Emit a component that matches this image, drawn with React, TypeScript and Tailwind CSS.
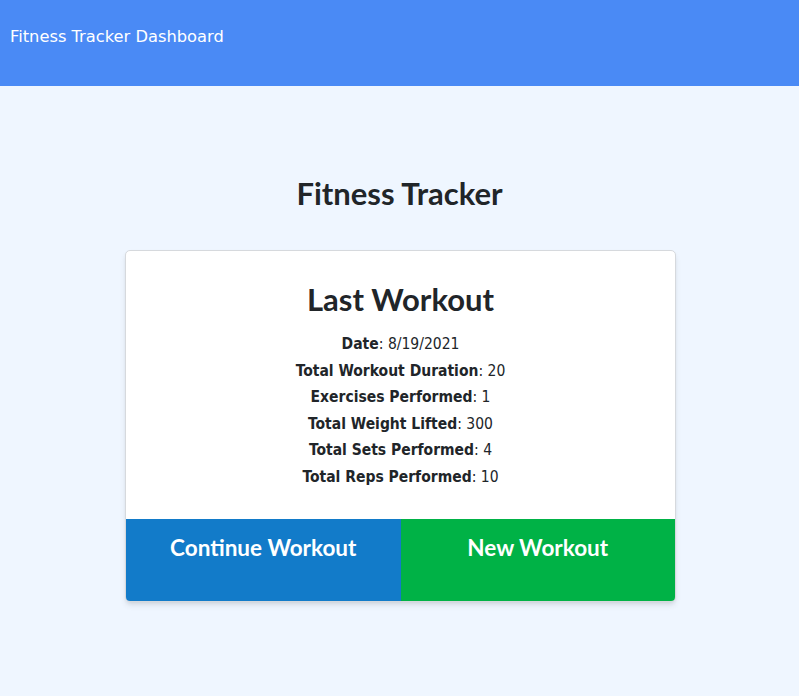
import React from 'react';

const stats: [string, string][] = [
  ['Date', '8/19/2021'],
  ['Total Workout Duration', '20'],
  ['Exercises Performed', '1'],
  ['Total Weight Lifted', '300'],
  ['Total Sets Performed', '4'],
  ['Total Reps Performed', '10'],
];

const App: React.FC = () => {
  return (
    <div className="min-h-[696px] bg-[#eff6ff]">
      <header className="h-[86px] bg-[#4a8af5] px-[10px] pt-[24px]">
        <span className="text-white text-[16.3px] font-['DejaVu_Sans',sans-serif]">
          Fitness Tracker Dashboard
        </span>
      </header>

      <main className="flex flex-col items-center pt-[87px] font-['Lato',sans-serif]">
        <h1 className="text-[31px] font-bold text-[#212529] leading-[40px]">Fitness Tracker</h1>

        <div className="mt-[37px] ml-[2px] w-[551px] bg-white rounded-[5px] border border-[#d6d9dd] shadow-md overflow-hidden">
          <div className="flex flex-col items-center pt-[28px] pb-[32px]">
            <h2 className="text-[31px] font-bold text-[#212529] leading-[40px]">Last Workout</h2>
            <div className="mt-[15px] flex flex-col items-center gap-[6.5px] text-[15.5px] text-[#212529] font-['DejaVu_Sans_Condensed','DejaVu_Sans',sans-serif]">
              {stats.map(([label, value]) => (
                <p key={label} className="leading-[20px]">
                  <span className="font-bold">{label}</span>: {value}
                </p>
              ))}
            </div>
          </div>
          <div className="flex">
            <button className="flex-1 h-[82px] bg-[#127bc9] text-white text-[22.5px] font-bold pt-[12px] flex justify-center">
              Continue Workout
            </button>
            <button className="flex-1 h-[82px] bg-[#00b246] text-white text-[22.5px] font-bold pt-[12px] flex justify-center">
              New Workout
            </button>
          </div>
        </div>
      </main>
    </div>
  );
};

export default App;
